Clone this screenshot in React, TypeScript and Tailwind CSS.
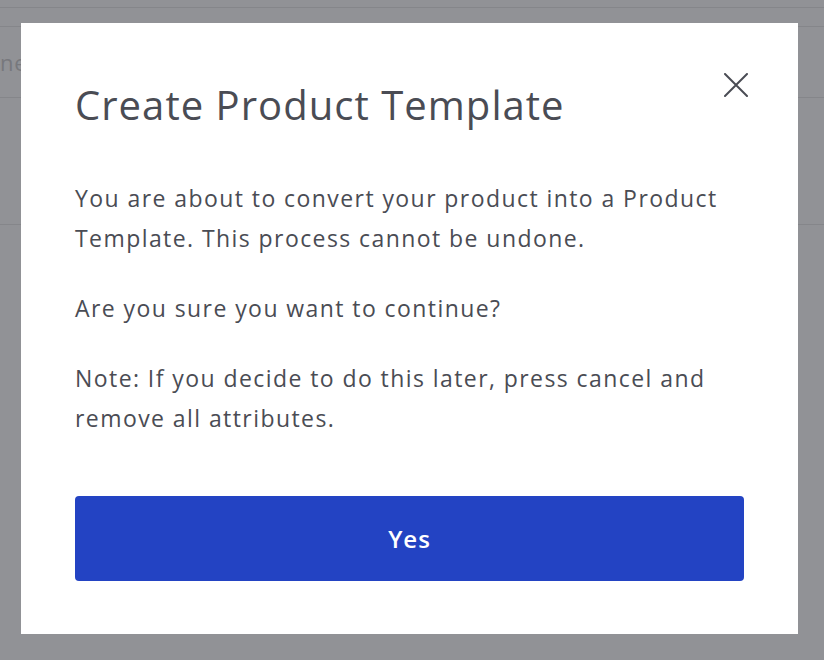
const CloseIcon = () => (
  <svg width="24" height="24" viewBox="0 0 24 24" fill="none" stroke="#4a4c54" strokeWidth="2" strokeLinecap="round">
    <path d="M1 1 L23 23 M23 1 L1 23" />
  </svg>
)

export default function App() {
  return (
    <div className="relative h-[660px] w-[824px] overflow-hidden bg-[#919296] font-['Open_Sans',sans-serif]">
      {/* page behind the overlay */}
      <div className="h-[8px] border-b border-[#85868a]" />
      <div className="h-[19px] border-b border-[#85868a]" />
      <div className="flex h-[71px] items-center border-b border-[#85868a]">
        <span className="text-[22px] tracking-[0.04em] text-[#77787d]">ne</span>
      </div>
      <div className="h-[127px] border-b border-[#85868a]" />

      <div className="absolute left-[21px] top-[23px] flex h-[611px] w-[777px] flex-col bg-white px-[54px] pt-[58px] text-[#4a4c54]">
        <button className="absolute right-[50px] top-[50px]" aria-label="Close">
          <CloseIcon />
        </button>
        <h2 className="text-[40px] leading-[48px] tracking-[0.026em]">Create Product Template</h2>
        <div className="mt-[49px] flex flex-col gap-[30px] text-[23px] leading-[40px] tracking-[0.062em]">
          <p>You are about to convert your product into a Product Template. This process cannot be undone.</p>
          <p>Are you sure you want to continue?</p>
          <p>Note: If you decide to do this later, press cancel and remove all attributes.</p>
        </div>
        <button className="mt-[58px] h-[85px] w-full rounded-[4px] bg-[#2343c3] text-[24px] font-semibold tracking-[0.04em] text-white">
          Yes
        </button>
      </div>
    </div>
  )
}
